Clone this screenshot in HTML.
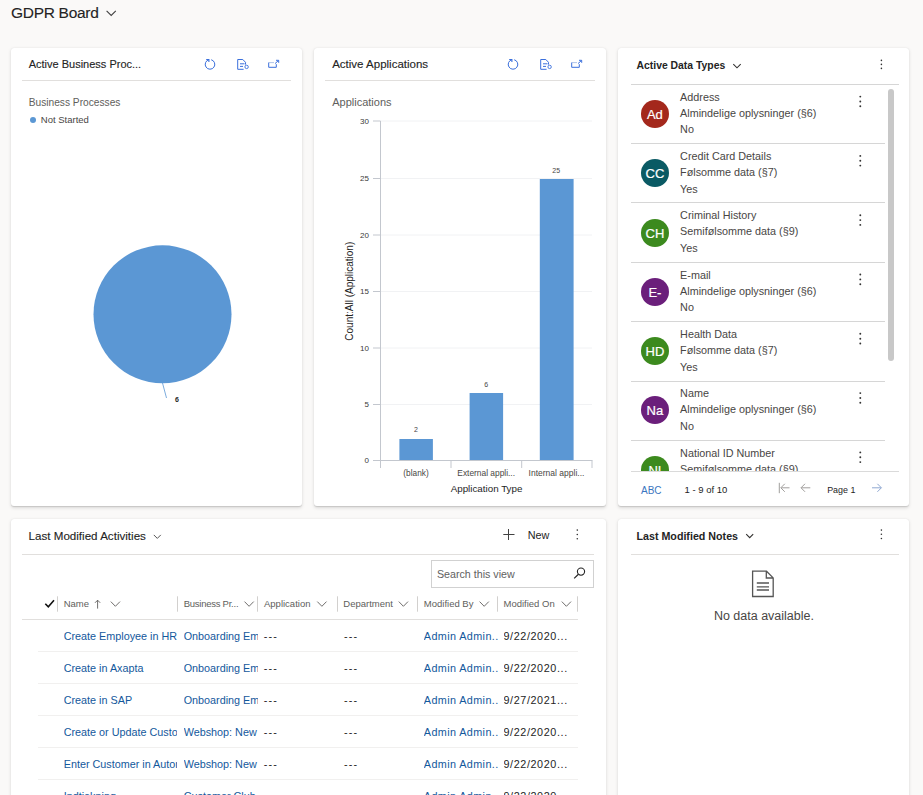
<!DOCTYPE html>
<html><head><meta charset="utf-8">
<style>
html,body{margin:0;padding:0;}
body{width:923px;height:795px;overflow:hidden;position:relative;background:#faf9f8;font-family:"Liberation Sans",sans-serif;color:#242424;}
.a{position:absolute;white-space:nowrap;line-height:1;}
.card{position:absolute;background:#fff;border-radius:3px;box-shadow:0 1.6px 3.6px rgba(0,0,0,0.13),0 0.3px 0.9px rgba(0,0,0,0.11);}
.hl{position:absolute;height:1px;background:#e1dfdd;}
.sb{-webkit-text-stroke:0.12px #242424;}
svg{position:absolute;overflow:visible;}
</style></head>
<body>
<!-- page title -->
<div class="a sb" style="left:11px;top:4.9px;font-size:15.5px;letter-spacing:-0.3px">GDPR Board</div>
<svg style="left:106px;top:10px" width="11" height="6" viewBox="0 0 11 6"><polyline points="0.6,0.9 5.2,5.5 9.8,0.9" fill="none" stroke="#424242" stroke-width="1.1"/></svg>

<!-- cards -->
<div class="card" style="left:11px;top:48px;width:291px;height:458px"></div>
<div class="card" style="left:314px;top:48px;width:292px;height:458px"></div>
<div class="card" style="left:618px;top:48px;width:291px;height:458px"></div>
<div class="card" style="left:11px;top:518.5px;width:595px;height:320px"></div>
<div class="card" style="left:618px;top:518.5px;width:291px;height:320px"></div>

<!-- CARD 1 -->
<svg style="left:0px;top:0" width="300" height="80">
  <path d="M 208.9 59.73 A 4.8 4.8 0 1 0 211.2 59.75" fill="none" stroke="#3a6fdc" stroke-width="1"/>
  <path d="M 206.2 59.5 L 208.9 59.5 L 208.9 62" fill="none" stroke="#3a6fdc" stroke-width="1.1"/>
  <path d="M 237.7 59.5 L 242.8 59.5 L 245.5 62.3 L 245.5 64.6 M 243.6 69.3 L 237.7 69.3 L 237.7 59.5" fill="none" stroke="#3a6fdc" stroke-width="1"/>
  <path d="M 240 63.8 L 244.5 63.8 M 240 66.4 L 243 66.4" stroke="#3a6fdc" stroke-width="1"/>
  <circle cx="246.6" cy="66.9" r="1.7" fill="none" stroke="#3a6fdc" stroke-width="0.9"/>
  <path d="M 268.7 62.6 L 274 62.6" stroke="#a8bde6" stroke-width="0.9"/>
  <path d="M 268.7 62.6 L 268.7 67.3 L 276.3 67.3 L 276.3 64.2" fill="none" stroke="#3a6fdc" stroke-width="1"/>
  <path d="M 275 63.6 L 278.4 60.6 M 276 60.3 L 278.7 60.3 L 278.7 62.8" fill="none" stroke="#3a6fdc" stroke-width="1"/>
</svg>
<div class="a sb" style="left:28.7px;top:58.6px;font-size:11px;">Active Business Proc...</div>
<div class="hl" style="left:22px;top:80px;width:269px"></div>
<div class="a" style="left:28.7px;top:97.9px;font-size:10.2px;color:#605e5c">Business Processes</div>
<div style="position:absolute;left:30px;top:116.7px;width:6px;height:6px;border-radius:50%;background:#5b97d4"></div>
<div class="a" style="left:40.8px;top:115px;font-size:9.5px;color:#484644">Not Started</div>
<svg style="left:0;top:0" width="923" height="795">
  <circle cx="162.5" cy="314.3" r="69" fill="#5b97d4"/>
  <line x1="162.5" y1="383" x2="166.5" y2="398" stroke="#5b97d4" stroke-width="0.8"/>
</svg>
<div class="a" style="left:175.1px;top:395.8px;font-size:7px;color:#242424;font-weight:bold">6</div>

<!-- CARD 2 -->
<svg style="left:303px;top:0" width="300" height="80">
  <path d="M 208.9 59.73 A 4.8 4.8 0 1 0 211.2 59.75" fill="none" stroke="#3a6fdc" stroke-width="1"/>
  <path d="M 206.2 59.5 L 208.9 59.5 L 208.9 62" fill="none" stroke="#3a6fdc" stroke-width="1.1"/>
  <path d="M 237.7 59.5 L 242.8 59.5 L 245.5 62.3 L 245.5 64.6 M 243.6 69.3 L 237.7 69.3 L 237.7 59.5" fill="none" stroke="#3a6fdc" stroke-width="1"/>
  <path d="M 240 63.8 L 244.5 63.8 M 240 66.4 L 243 66.4" stroke="#3a6fdc" stroke-width="1"/>
  <circle cx="246.6" cy="66.9" r="1.7" fill="none" stroke="#3a6fdc" stroke-width="0.9"/>
  <path d="M 268.7 62.6 L 274 62.6" stroke="#a8bde6" stroke-width="0.9"/>
  <path d="M 268.7 62.6 L 268.7 67.3 L 276.3 67.3 L 276.3 64.2" fill="none" stroke="#3a6fdc" stroke-width="1"/>
  <path d="M 275 63.6 L 278.4 60.6 M 276 60.3 L 278.7 60.3 L 278.7 62.8" fill="none" stroke="#3a6fdc" stroke-width="1"/>
</svg>
<div class="a sb" style="left:332.2px;top:58.6px;font-size:11.5px;">Active Applications</div>
<div class="hl" style="left:325px;top:80px;width:270px"></div>
<div class="a" style="left:332.2px;top:97.2px;font-size:11px;color:#605e5c">Applications</div>

<svg style="left:0;top:0" width="923" height="795">
<line x1="380.5" y1="121" x2="592" y2="121" stroke="#f1f2f4" stroke-width="1"/><line x1="373" y1="121" x2="380.5" y2="121" stroke="#c3c7ce" stroke-width="1"/><line x1="380.5" y1="178.5" x2="592" y2="178.5" stroke="#f1f2f4" stroke-width="1"/><line x1="373" y1="178.5" x2="380.5" y2="178.5" stroke="#c3c7ce" stroke-width="1"/><line x1="380.5" y1="235" x2="592" y2="235" stroke="#f1f2f4" stroke-width="1"/><line x1="373" y1="235" x2="380.5" y2="235" stroke="#c3c7ce" stroke-width="1"/><line x1="380.5" y1="291.5" x2="592" y2="291.5" stroke="#f1f2f4" stroke-width="1"/><line x1="373" y1="291.5" x2="380.5" y2="291.5" stroke="#c3c7ce" stroke-width="1"/><line x1="380.5" y1="348" x2="592" y2="348" stroke="#f1f2f4" stroke-width="1"/><line x1="373" y1="348" x2="380.5" y2="348" stroke="#c3c7ce" stroke-width="1"/><line x1="380.5" y1="404.5" x2="592" y2="404.5" stroke="#f1f2f4" stroke-width="1"/><line x1="373" y1="404.5" x2="380.5" y2="404.5" stroke="#c3c7ce" stroke-width="1"/><line x1="373" y1="460.5" x2="380.5" y2="460.5" stroke="#c3c7ce" stroke-width="1"/>
<line x1="380.5" y1="121" x2="380.5" y2="468" stroke="#c3c7ce" stroke-width="1"/>
<line x1="373" y1="460.5" x2="592.5" y2="460.5" stroke="#c3c7ce" stroke-width="1"/>
<line x1="451" y1="460.5" x2="451" y2="468" stroke="#c3c7ce" stroke-width="1"/>
<line x1="521.7" y1="460.5" x2="521.7" y2="468" stroke="#c3c7ce" stroke-width="1"/>
<line x1="592" y1="460.5" x2="592" y2="468" stroke="#c3c7ce" stroke-width="1"/>
<rect x="399.4" y="439" width="33.5" height="21" fill="#5b97d4"/>
<rect x="469.6" y="393" width="33.5" height="67" fill="#5b97d4"/>
<rect x="539.8" y="179" width="33.8" height="281" fill="#5b97d4"/>
</svg>
<div class="a" style="left:360.0px;top:117.6px;font-size:8px;color:#3b3a39;text-align:right">30</div><div class="a" style="left:360.0px;top:175.1px;font-size:8px;color:#3b3a39;text-align:right">25</div><div class="a" style="left:360.0px;top:231.6px;font-size:8px;color:#3b3a39;text-align:right">20</div><div class="a" style="left:360.0px;top:288.1px;font-size:8px;color:#3b3a39;text-align:right">15</div><div class="a" style="left:360.0px;top:344.6px;font-size:8px;color:#3b3a39;text-align:right">10</div><div class="a" style="left:364.5px;top:401.1px;font-size:8px;color:#3b3a39;text-align:right">5</div><div class="a" style="left:364.5px;top:457.1px;font-size:8px;color:#3b3a39;text-align:right">0</div>
<div class="a" style="left:414px;top:425.8px;font-size:7px;color:#484644">2</div>
<div class="a" style="left:484.2px;top:380.8px;font-size:7px;color:#484644">6</div>
<div class="a" style="left:552.3px;top:166.8px;font-size:7px;color:#484644">25</div>
<div class="a" style="left:403.3px;top:468.6px;font-size:8.3px;color:#484644">(blank)</div>
<div class="a" style="left:457.3px;top:468.6px;font-size:8.4px;color:#484644">External appli...</div>
<div class="a" style="left:528.6px;top:468.6px;font-size:8.5px;color:#484644">Internal appli...</div>
<div class="a" style="left:450.7px;top:484px;font-size:9.8px;color:#242424">Application Type</div>
<div class="a" style="left:300.8px;top:286.5px;width:97.4px;font-size:10px;color:#242424;transform:rotate(-90deg);transform-origin:48.7px 5px;text-align:center">Count:All (Application)</div>

<!-- CARD 3 -->
<div class="a" style="left:636.5px;top:60.9px;font-size:10.4px;font-weight:bold;color:#242424">Active Data Types</div>
<div class="hl" style="left:630.5px;top:84px;width:268px;background:#d6d6d6"></div>

<div style="position:absolute;left:618px;top:85px;width:291px;height:386px;overflow:hidden">
<div style="position:absolute;left:22.90px;top:14.90px;width:28px;height:28px;border-radius:50%;background:#a4281c;color:#fff;font-size:13px;line-height:29px;text-align:center;-webkit-text-stroke:0.2px #fff">Ad</div>
<div class="a" style="left:62.10px;top:6.86px;font-size:10.8px;color:#484644">Address</div>
<div class="a" style="left:62.10px;top:22.86px;font-size:10.8px;color:#484644">Almindelige oplysninger (§6)</div>
<div class="a" style="left:62.10px;top:39.36px;font-size:10.8px;color:#484644">No</div>
<div style="position:absolute;left:22.90px;top:74.20px;width:28px;height:28px;border-radius:50%;background:#0a5a64;color:#fff;font-size:13px;line-height:29px;text-align:center;-webkit-text-stroke:0.2px #fff">CC</div>
<div class="a" style="left:62.10px;top:66.16px;font-size:10.8px;color:#484644">Credit Card Details</div>
<div class="a" style="left:62.10px;top:82.16px;font-size:10.8px;color:#484644">Følsomme data (§7)</div>
<div class="a" style="left:62.10px;top:98.66px;font-size:10.8px;color:#484644">Yes</div>
<div style="position:absolute;left:22.90px;top:133.50px;width:28px;height:28px;border-radius:50%;background:#3c8a1e;color:#fff;font-size:13px;line-height:29px;text-align:center;-webkit-text-stroke:0.2px #fff">CH</div>
<div class="a" style="left:62.10px;top:125.46px;font-size:10.8px;color:#484644">Criminal History</div>
<div class="a" style="left:62.10px;top:141.46px;font-size:10.8px;color:#484644">Semifølsomme data (§9)</div>
<div class="a" style="left:62.10px;top:157.96px;font-size:10.8px;color:#484644">Yes</div>
<div style="position:absolute;left:22.90px;top:192.80px;width:28px;height:28px;border-radius:50%;background:#6b1f7b;color:#fff;font-size:13px;line-height:29px;text-align:center;-webkit-text-stroke:0.2px #fff">E-</div>
<div class="a" style="left:62.10px;top:184.76px;font-size:10.8px;color:#484644">E-mail</div>
<div class="a" style="left:62.10px;top:200.76px;font-size:10.8px;color:#484644">Almindelige oplysninger (§6)</div>
<div class="a" style="left:62.10px;top:217.26px;font-size:10.8px;color:#484644">No</div>
<div style="position:absolute;left:22.90px;top:252.10px;width:28px;height:28px;border-radius:50%;background:#3c8a1e;color:#fff;font-size:13px;line-height:29px;text-align:center;-webkit-text-stroke:0.2px #fff">HD</div>
<div class="a" style="left:62.10px;top:244.06px;font-size:10.8px;color:#484644">Health Data</div>
<div class="a" style="left:62.10px;top:260.06px;font-size:10.8px;color:#484644">Følsomme data (§7)</div>
<div class="a" style="left:62.10px;top:276.56px;font-size:10.8px;color:#484644">Yes</div>
<div style="position:absolute;left:22.90px;top:311.40px;width:28px;height:28px;border-radius:50%;background:#6b1f7b;color:#fff;font-size:13px;line-height:29px;text-align:center;-webkit-text-stroke:0.2px #fff">Na</div>
<div class="a" style="left:62.10px;top:303.36px;font-size:10.8px;color:#484644">Name</div>
<div class="a" style="left:62.10px;top:319.36px;font-size:10.8px;color:#484644">Almindelige oplysninger (§6)</div>
<div class="a" style="left:62.10px;top:335.86px;font-size:10.8px;color:#484644">No</div>
<div style="position:absolute;left:22.90px;top:370.70px;width:28px;height:28px;border-radius:50%;background:#3c8a1e;color:#fff;font-size:13px;line-height:29px;text-align:center;-webkit-text-stroke:0.2px #fff">NI</div>
<div class="a" style="left:62.10px;top:362.66px;font-size:10.8px;color:#484644">National ID Number</div>
<div class="a" style="left:62.10px;top:378.66px;font-size:10.8px;color:#484644">Semifølsomme data (§9)</div>
<div class="a" style="left:62.10px;top:395.16px;font-size:10.8px;color:#484644">Yes</div>
<svg style="left:0;top:0" width="291" height="386"><circle cx="242.29999999999995" cy="11.60" r="0.95" fill="#333"/><circle cx="242.29999999999995" cy="16.50" r="0.95" fill="#333"/><circle cx="242.29999999999995" cy="21.30" r="0.95" fill="#333"/><circle cx="242.29999999999995" cy="70.90" r="0.95" fill="#333"/><circle cx="242.29999999999995" cy="75.80" r="0.95" fill="#333"/><circle cx="242.29999999999995" cy="80.60" r="0.95" fill="#333"/><circle cx="242.29999999999995" cy="130.20" r="0.95" fill="#333"/><circle cx="242.29999999999995" cy="135.10" r="0.95" fill="#333"/><circle cx="242.29999999999995" cy="139.90" r="0.95" fill="#333"/><circle cx="242.29999999999995" cy="189.50" r="0.95" fill="#333"/><circle cx="242.29999999999995" cy="194.40" r="0.95" fill="#333"/><circle cx="242.29999999999995" cy="199.20" r="0.95" fill="#333"/><circle cx="242.29999999999995" cy="248.80" r="0.95" fill="#333"/><circle cx="242.29999999999995" cy="253.70" r="0.95" fill="#333"/><circle cx="242.29999999999995" cy="258.50" r="0.95" fill="#333"/><circle cx="242.29999999999995" cy="308.10" r="0.95" fill="#333"/><circle cx="242.29999999999995" cy="313.00" r="0.95" fill="#333"/><circle cx="242.29999999999995" cy="317.80" r="0.95" fill="#333"/><circle cx="242.29999999999995" cy="367.40" r="0.95" fill="#333"/><circle cx="242.29999999999995" cy="372.30" r="0.95" fill="#333"/><circle cx="242.29999999999995" cy="377.10" r="0.95" fill="#333"/></svg>
<div class="hl" style="left:12.5px;top:58px;width:254px;background:#d6d6d6"></div>
<div class="hl" style="left:12.5px;top:117px;width:254px;background:#d6d6d6"></div>
<div class="hl" style="left:12.5px;top:177px;width:254px;background:#d6d6d6"></div>
<div class="hl" style="left:12.5px;top:236px;width:254px;background:#d6d6d6"></div>
<div class="hl" style="left:12.5px;top:296px;width:254px;background:#d6d6d6"></div>
<div class="hl" style="left:12.5px;top:355px;width:254px;background:#d6d6d6"></div>
</div>
<div style="position:absolute;left:888px;top:89px;width:6px;height:272px;border-radius:3px;background:#c8c8c8"></div>
<div class="hl" style="left:630.5px;top:471px;width:268px;background:#dadada"></div>
<svg style="left:0;top:0" width="923" height="795"><polyline points="733.3,64.1 737,67.8 740.7,64.1" fill="none" stroke="#323130" stroke-width="1.05"/></svg>

<div class="a" style="left:641px;top:485.8px;font-size:10px;color:#3a76c0">ABC</div>
<div class="a" style="left:684.6px;top:484.8px;font-size:9.5px;color:#242424">1 - 9 of 10</div>
<div class="a" style="left:827.2px;top:485.5px;font-size:8.9px;color:#242424">Page 1</div>
<svg style="left:0;top:0" width="923" height="795">
<path d="M 779.3 482.8 L 779.3 493.2 M 781.2 487.8 L 789.5 487.8 M 784.8 483.8 L 780.8 487.8 L 784.8 491.8" fill="none" stroke="#a19f9d" stroke-width="1"/>
<path d="M 801.2 487.8 L 810.3 487.8 M 805 483.8 L 801 487.8 L 805 491.8" fill="none" stroke="#a19f9d" stroke-width="1"/>
<path d="M 872 487.8 L 881.2 487.8 M 877.4 483.8 L 881.4 487.8 L 877.4 491.8" fill="none" stroke="#8fa8d2" stroke-width="1"/>
</svg>

<!-- CARD 4 -->
<div class="a sb" style="left:28.6px;top:530.2px;font-size:11.6px;">Last Modified Activities</div>
<div class="hl" style="left:22px;top:554px;width:572px"></div>

<svg style="left:0;top:0" width="923" height="795">
<polyline points="153.8,534.9 157.3,538.4 160.8,534.9" fill="none" stroke="#424242" stroke-width="0.9"/>
<path d="M 503.3 534.5 L 514.5 534.5 M 508.5 529 L 508.5 540" stroke="#424242" stroke-width="1"/>
<rect x="431.5" y="560.5" width="162" height="27" fill="none" stroke="#d1d1d1" stroke-width="1"/>
<circle cx="581" cy="571.6" r="3.6" fill="none" stroke="#242424" stroke-width="1.1"/>
<path d="M 578.4 574.3 L 574.2 578.4" stroke="#242424" stroke-width="1.2"/>
<polyline points="45.3,603.8 48.3,606.8 54,600.3" fill="none" stroke="#111" stroke-width="1.6"/>
<line x1="57.5" y1="596.3" x2="57.5" y2="611.7" stroke="#d2d0ce" stroke-width="1"/>
<line x1="177.5" y1="596.3" x2="177.5" y2="611.7" stroke="#d2d0ce" stroke-width="1"/>
<line x1="257.5" y1="596.3" x2="257.5" y2="611.7" stroke="#d2d0ce" stroke-width="1"/>
<line x1="337.5" y1="596.3" x2="337.5" y2="611.7" stroke="#d2d0ce" stroke-width="1"/>
<line x1="417.5" y1="596.3" x2="417.5" y2="611.7" stroke="#d2d0ce" stroke-width="1"/>
<line x1="497.5" y1="596.3" x2="497.5" y2="611.7" stroke="#d2d0ce" stroke-width="1"/>
<line x1="577.5" y1="596.3" x2="577.5" y2="611.7" stroke="#d2d0ce" stroke-width="1"/>
<path d="M 97.6 608.6 L 97.6 600.2 M 95 602.8 L 97.6 600.2 L 100.2 602.8" fill="none" stroke="#605e5c" stroke-width="0.9"/>
<polyline points="110.8,601.6 115.39999999999999,606.3 120.0,601.6" fill="none" stroke="#605e5c" stroke-width="0.9"/>
<polyline points="244.5,601.6 249.1,606.3 253.7,601.6" fill="none" stroke="#605e5c" stroke-width="0.9"/>
<polyline points="317.3,601.6 321.90000000000003,606.3 326.5,601.6" fill="none" stroke="#605e5c" stroke-width="0.9"/>
<polyline points="398.8,601.6 403.40000000000003,606.3 408.0,601.6" fill="none" stroke="#605e5c" stroke-width="0.9"/>
<polyline points="479.6,601.6 484.20000000000005,606.3 488.8,601.6" fill="none" stroke="#605e5c" stroke-width="0.9"/>
<polyline points="561.8,601.6 566.4,606.3 571.0,601.6" fill="none" stroke="#605e5c" stroke-width="0.9"/>
<line x1="22" y1="619.5" x2="578" y2="619.5" stroke="#e1dfdd" stroke-width="1"/>
<line x1="38" y1="651.5" x2="578" y2="651.5" stroke="#f1f0ef" stroke-width="1"/>
<line x1="38" y1="683.5" x2="578" y2="683.5" stroke="#f1f0ef" stroke-width="1"/>
<line x1="38" y1="715.5" x2="578" y2="715.5" stroke="#f1f0ef" stroke-width="1"/>
<line x1="38" y1="747.5" x2="578" y2="747.5" stroke="#f1f0ef" stroke-width="1"/>
<line x1="38" y1="779.5" x2="578" y2="779.5" stroke="#f1f0ef" stroke-width="1"/>
</svg>
<div class="a" style="left:527.8px;top:529.8px;font-size:10.8px;color:#242424">New</div>
<div class="a" style="left:436.9px;top:568.7px;font-size:10.7px;color:#616161">Search this view</div>
<div class="a" style="left:63.7px;top:599.0600000000001px;font-size:9.5px;color:#605e5c">Name</div>
<div class="a" style="left:183.7px;top:599.0600000000001px;font-size:9.5px;color:#605e5c;letter-spacing:-0.25px">Business Pr...</div>
<div class="a" style="left:264px;top:599.0600000000001px;font-size:9.5px;color:#605e5c">Application</div>
<div class="a" style="left:343.3px;top:599.0600000000001px;font-size:9.5px;color:#605e5c">Department</div>
<div class="a" style="left:423.8px;top:599.0600000000001px;font-size:9.5px;color:#605e5c">Modified By</div>
<div class="a" style="left:503.5px;top:599.0600000000001px;font-size:9.5px;color:#605e5c">Modified On</div>
<div class="a" style="left:63.7px;top:630.66px;width:113px;overflow:hidden;padding-bottom:3px;font-size:10.8px;color:#13589c">Create Employee in HR</div>
<div class="a" style="left:183.7px;top:630.66px;width:74px;overflow:hidden;padding-bottom:3px;font-size:10.8px;color:#13589c">Onboarding Employee</div>
<div class="a" style="left:263.7px;top:630.66px;font-size:10.8px;color:#242424;letter-spacing:1.2px">---</div>
<div class="a" style="left:344px;top:630.66px;font-size:10.8px;color:#242424;letter-spacing:1.2px">---</div>
<div class="a" style="left:423.8px;top:630.66px;width:74px;overflow:hidden;padding-bottom:3px;font-size:10.8px;color:#13589c;letter-spacing:0.4px">Admin Admin..</div>
<div class="a" style="left:503.5px;top:630.66px;width:74px;overflow:hidden;padding-bottom:3px;font-size:10.8px;color:#242424;letter-spacing:0.6px">9/22/2020...</div>
<div class="a" style="left:63.7px;top:662.66px;width:113px;overflow:hidden;padding-bottom:3px;font-size:10.8px;color:#13589c">Create in Axapta</div>
<div class="a" style="left:183.7px;top:662.66px;width:74px;overflow:hidden;padding-bottom:3px;font-size:10.8px;color:#13589c">Onboarding Employee</div>
<div class="a" style="left:263.7px;top:662.66px;font-size:10.8px;color:#242424;letter-spacing:1.2px">---</div>
<div class="a" style="left:344px;top:662.66px;font-size:10.8px;color:#242424;letter-spacing:1.2px">---</div>
<div class="a" style="left:423.8px;top:662.66px;width:74px;overflow:hidden;padding-bottom:3px;font-size:10.8px;color:#13589c;letter-spacing:0.4px">Admin Admin..</div>
<div class="a" style="left:503.5px;top:662.66px;width:74px;overflow:hidden;padding-bottom:3px;font-size:10.8px;color:#242424;letter-spacing:0.6px">9/22/2020...</div>
<div class="a" style="left:63.7px;top:694.66px;width:113px;overflow:hidden;padding-bottom:3px;font-size:10.8px;color:#13589c">Create in SAP</div>
<div class="a" style="left:183.7px;top:694.66px;width:74px;overflow:hidden;padding-bottom:3px;font-size:10.8px;color:#13589c">Onboarding Employee</div>
<div class="a" style="left:263.7px;top:694.66px;font-size:10.8px;color:#242424;letter-spacing:1.2px">---</div>
<div class="a" style="left:344px;top:694.66px;font-size:10.8px;color:#242424;letter-spacing:1.2px">---</div>
<div class="a" style="left:423.8px;top:694.66px;width:74px;overflow:hidden;padding-bottom:3px;font-size:10.8px;color:#13589c;letter-spacing:0.4px">Admin Admin..</div>
<div class="a" style="left:503.5px;top:694.66px;width:74px;overflow:hidden;padding-bottom:3px;font-size:10.8px;color:#242424;letter-spacing:0.6px">9/27/2021...</div>
<div class="a" style="left:63.7px;top:726.66px;width:113px;overflow:hidden;padding-bottom:3px;font-size:10.8px;color:#13589c">Create or Update Customer</div>
<div class="a" style="left:183.7px;top:726.66px;width:74px;overflow:hidden;padding-bottom:3px;font-size:10.8px;color:#13589c">Webshop: New Customer</div>
<div class="a" style="left:263.7px;top:726.66px;font-size:10.8px;color:#242424;letter-spacing:1.2px">---</div>
<div class="a" style="left:344px;top:726.66px;font-size:10.8px;color:#242424;letter-spacing:1.2px">---</div>
<div class="a" style="left:423.8px;top:726.66px;width:74px;overflow:hidden;padding-bottom:3px;font-size:10.8px;color:#13589c;letter-spacing:0.4px">Admin Admin..</div>
<div class="a" style="left:503.5px;top:726.66px;width:74px;overflow:hidden;padding-bottom:3px;font-size:10.8px;color:#242424;letter-spacing:0.6px">9/22/2020...</div>
<div class="a" style="left:63.7px;top:758.66px;width:113px;overflow:hidden;padding-bottom:3px;font-size:10.8px;color:#13589c">Enter Customer in Automation</div>
<div class="a" style="left:183.7px;top:758.66px;width:74px;overflow:hidden;padding-bottom:3px;font-size:10.8px;color:#13589c">Webshop: New Customer</div>
<div class="a" style="left:263.7px;top:758.66px;font-size:10.8px;color:#242424;letter-spacing:1.2px">---</div>
<div class="a" style="left:344px;top:758.66px;font-size:10.8px;color:#242424;letter-spacing:1.2px">---</div>
<div class="a" style="left:423.8px;top:758.66px;width:74px;overflow:hidden;padding-bottom:3px;font-size:10.8px;color:#13589c;letter-spacing:0.4px">Admin Admin..</div>
<div class="a" style="left:503.5px;top:758.66px;width:74px;overflow:hidden;padding-bottom:3px;font-size:10.8px;color:#242424;letter-spacing:0.6px">9/22/2020...</div>
<div class="a" style="left:63.7px;top:790.66px;width:113px;overflow:hidden;padding-bottom:3px;font-size:10.8px;color:#13589c">Indtiekning</div>
<div class="a" style="left:183.7px;top:790.66px;width:74px;overflow:hidden;padding-bottom:3px;font-size:10.8px;color:#13589c">Customer Club</div>
<div class="a" style="left:263.7px;top:790.66px;font-size:10.8px;color:#242424;letter-spacing:1.2px">---</div>
<div class="a" style="left:344px;top:790.66px;font-size:10.8px;color:#242424;letter-spacing:1.2px">---</div>
<div class="a" style="left:423.8px;top:790.66px;width:74px;overflow:hidden;padding-bottom:3px;font-size:10.8px;color:#13589c;letter-spacing:0.4px">Admin Admin..</div>
<div class="a" style="left:503.5px;top:790.66px;width:74px;overflow:hidden;padding-bottom:3px;font-size:10.8px;color:#242424;letter-spacing:0.6px">9/22/2020...</div>
<!-- CARD 5 -->
<div class="a" style="left:636.5px;top:530.9px;font-size:10.7px;font-weight:bold;color:#242424">Last Modified Notes</div>
<div class="hl" style="left:630.5px;top:554px;width:268px"></div>
<svg style="left:0;top:0" width="923" height="795">
<polyline points="746.2,534.2 749.7,537.7 753.2,534.2" fill="none" stroke="#323130" stroke-width="1.1"/>
<path d="M 752.6 571.2 L 766.5 571.2 L 773.2 577.9 L 773.2 596.5 L 752.6 596.5 Z M 766.3 571.2 L 766.3 578 L 773.2 578" fill="none" stroke="#555" stroke-width="1.3"/>
<path d="M 756.8 583 L 769 583 M 756.8 586.8 L 769 586.8 M 756.8 590 L 769 590" stroke="#555" stroke-width="1.3"/>
</svg>
<div class="a" style="left:713.9px;top:609.5px;font-size:12.5px;color:#484644">No data available.</div>

<svg style="left:0;top:0" width="923" height="795"><circle cx="881.4" cy="60.40" r="0.8" fill="#333"/><circle cx="881.4" cy="64.40" r="0.8" fill="#333"/><circle cx="881.4" cy="68.40" r="0.8" fill="#333"/><circle cx="577.3" cy="530.10" r="0.8" fill="#333"/><circle cx="577.3" cy="534.50" r="0.8" fill="#333"/><circle cx="577.3" cy="538.80" r="0.8" fill="#333"/><circle cx="881.4" cy="530.10" r="0.8" fill="#333"/><circle cx="881.4" cy="534.30" r="0.8" fill="#333"/><circle cx="881.4" cy="538.50" r="0.8" fill="#333"/></svg>
</body></html>
